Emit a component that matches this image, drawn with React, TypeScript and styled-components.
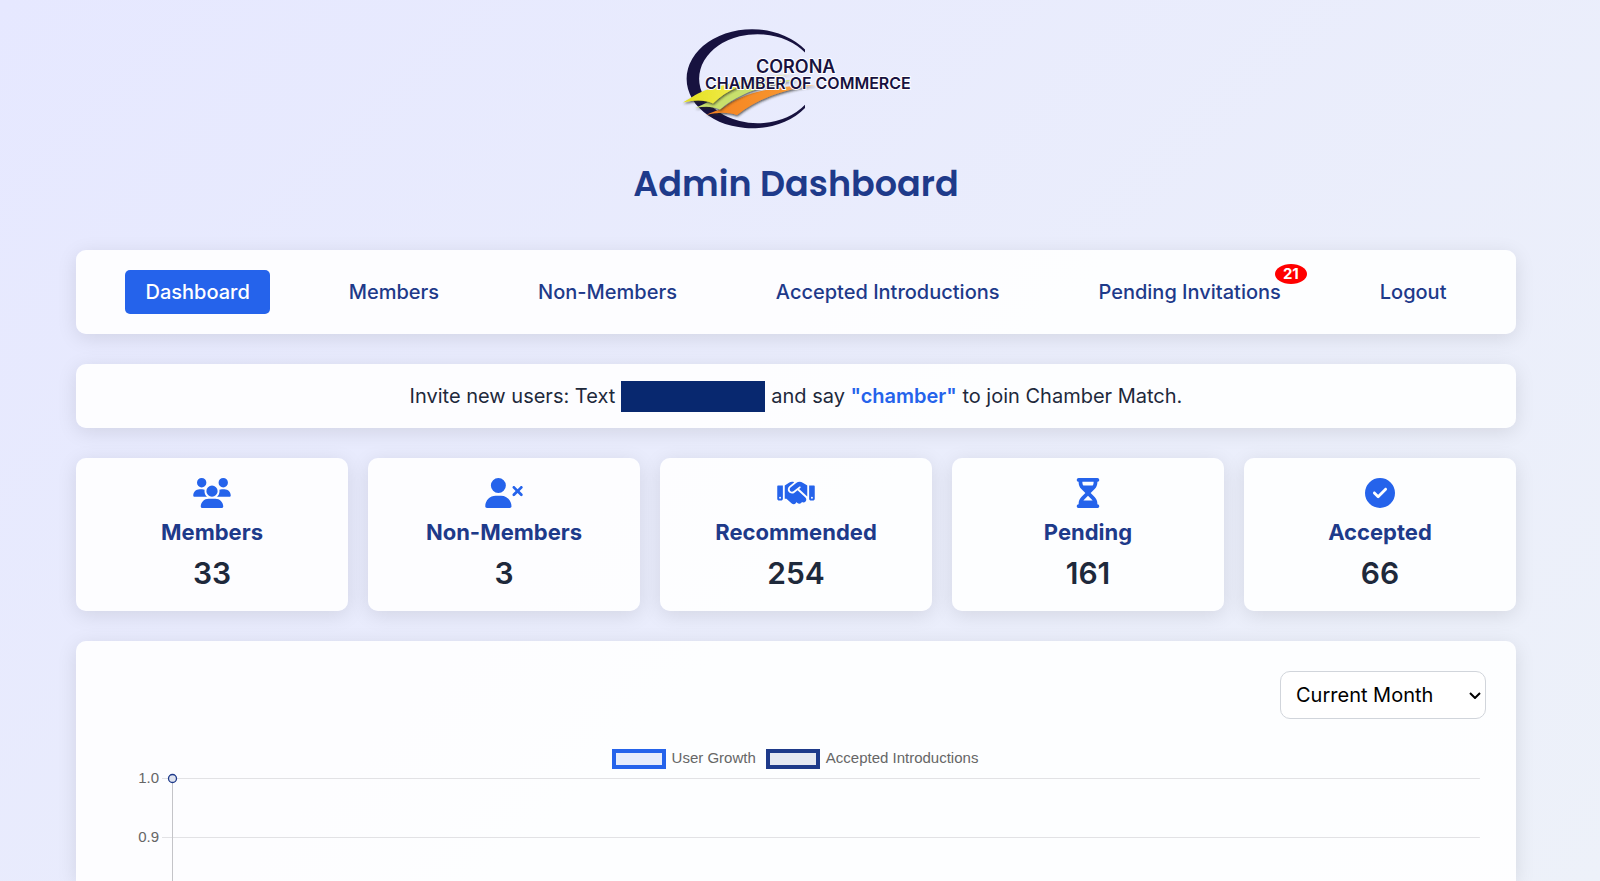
import React from 'react';
import styled, { createGlobalStyle } from 'styled-components';
import {
  FaUsers,
  FaUserXmark,
  FaHandshake,
  FaCircleCheck,
} from 'react-icons/fa6';

const GlobalStyle = createGlobalStyle`
  *, *::before, *::after { box-sizing: border-box; }
  html { background: #edf0fa; }
  body {
    margin: 0;
    padding: 20px 28px 0 20px;
    min-height: 100vh;
    font-family: Inter, "Liberation Sans", sans-serif;
    font-size: 20px;
    line-height: 24px;
    color: #1e293b;
    background: linear-gradient(135deg, #e6e8ff 0%, #edf1f9 100%);
  }
`;

const Page = styled.div`
  max-width: 1440px;
  margin: 0 auto;
  display: flex;
  flex-direction: column;
  gap: 30px;
`;

const Header = styled.header`
  display: flex;
  flex-direction: column;
  align-items: center;
  gap: 16px;
`;

const Logo = styled.svg`
  display: block;
  width: 250px;
  height: 120px;
`;

const Title = styled.h1`
  margin: 0;
  padding-bottom: 8px;
  font-family: Poppins, Inter, sans-serif;
  font-size: 35px;
  font-weight: 600;
  line-height: 56px;
  color: #1e3a8a;
`;

const Panel = styled.section`
  background: rgba(255, 255, 255, 0.9);
  border-radius: 10px;
  box-shadow: 0 4px 20px rgba(0, 0, 0, 0.1);
`;

const Nav = styled(Panel).attrs({ as: 'nav' })`
  padding: 20px;
`;

const NavList = styled.ul`
  margin: 0;
  padding: 0;
  list-style: none;
  display: flex;
  justify-content: space-around;
`;

const NavItem = styled.li`
  position: relative;
`;

const NavLink = styled.a<{ $active?: boolean }>`
  display: block;
  padding: 10px 20px;
  border-radius: 5px;
  font-weight: 500;
  text-decoration: none;
  color: ${({ $active }) => ($active ? '#ffffff' : '#1e3a8a')};
  background: ${({ $active }) => ($active ? '#2563eb' : 'transparent')};
`;

const Badge = styled.span`
  position: absolute;
  top: -6px;
  right: -6px;
  padding: 0 8px;
  border-radius: 50%;
  background: #ff0000;
  color: #ffffff;
  font-size: 15px;
  font-weight: 700;
  line-height: 20px;
`;

const Invite = styled(Panel)`
  padding: 16px 20px;
  display: flex;
  justify-content: center;
  align-items: center;
  gap: 6px;
  line-height: 32px;
`;

const Redacted = styled.span`
  width: 144px;
  height: 31px;
  background: #08286f;
`;

const Keyword = styled.strong`
  font-weight: 600;
  color: #2563eb;
`;

const Stats = styled.div`
  display: grid;
  grid-template-columns: repeat(5, 1fr);
  gap: 20px;
`;

const StatCard = styled(Panel).attrs({ as: 'article' })`
  padding: 20px;
  display: flex;
  flex-direction: column;
  align-items: center;
  text-align: center;
  color: #2563eb;

  svg {
    display: block;
    width: 38px;
    height: 30px;
  }
`;

const StatName = styled.h2`
  margin: 11px 0 9px;
  font-size: 22px;
  font-weight: 700;
  line-height: 27px;
  color: #1e3a8a;
`;

const StatValue = styled.p`
  margin: 0;
  font-size: 30px;
  font-weight: 600;
  line-height: 36px;
  color: #1e293b;
`;

const ChartPanel = styled(Panel)`
  padding: 30px 30px 0;
  border-radius: 10px 10px 0 0;
`;

const Toolbar = styled.div`
  display: flex;
  justify-content: flex-end;
  margin-bottom: 30px;
`;

const PeriodField = styled.div`
  position: relative;
  width: 206px;
`;

const Period = styled.select`
  appearance: none;
  display: block;
  width: 100%;
  height: 48px;
  padding: 0 15px;
  border: 1px solid #d1d5db;
  border-radius: 10px;
  background: #ffffff;
  color: #000000;
  font-family: inherit;
  font-size: 20px;
`;

const Chevron = styled.svg`
  position: absolute;
  top: 21px;
  right: 5px;
  width: 12px;
  height: 7px;
  pointer-events: none;
`;

const Legend = styled.div`
  display: flex;
  justify-content: center;
  gap: 10px;
  padding-right: 2px;
  font-family: "Liberation Sans", Arial, sans-serif;
  font-size: 15px;
  line-height: 18px;
  color: #666666;
`;

const LegendItem = styled.span`
  display: flex;
  gap: 6px;
`;

const Swatch = styled.span<{ $line: string; $fill: string }>`
  width: 54px;
  height: 20px;
  border: 4px solid ${({ $line }) => $line};
  background: ${({ $fill }) => $fill};
`;

const Plot = styled.svg`
  display: block;
  width: 100%;
  height: 112px;

  text {
    font-family: "Liberation Sans", Arial, sans-serif;
    font-size: 15px;
    fill: #666666;
    text-anchor: end;
  }
`;

function Hourglass() {
  return (
    <svg viewBox="0 0 384 512" fill="currentColor" aria-hidden>
      <path d="M32 0C14.3 0 0 14.3 0 32S14.3 64 32 64V75c0 42.4 16.9 83.1 46.9 113.1L146.7 256 78.9 323.9C48.9 353.9 32 394.6 32 437v11c-17.7 0-32 14.3-32 32s14.3 32 32 32H352c17.7 0 32-14.3 32-32s-14.3-32-32-32V437c0-42.4-16.9-83.1-46.9-113.1L237.3 256l67.9-67.9c30-30 46.9-70.7 46.9-113.1V64c17.7 0 32-14.3 32-32s-14.3-32-32-32H32zM96 75V64H288V75c0 19-5.6 37.4-16 53H112c-10.3-15.6-16-34-16-53zm16 309c3.5-5.3 7.6-10.3 12.1-14.9L192 301.3l67.9 67.9c4.6 4.6 8.6 9.6 12.1 14.9H112z" />
    </svg>
  );
}

const links = [
  { label: 'Dashboard', active: true },
  { label: 'Members' },
  { label: 'Non-Members' },
  { label: 'Accepted Introductions' },
  { label: 'Pending Invitations', badge: 21 },
  { label: 'Logout' },
];

const stats: { name: string; value: number; Icon: React.ComponentType }[] = [
  { name: 'Members', value: 33, Icon: FaUsers },
  { name: 'Non-Members', value: 3, Icon: FaUserXmark },
  { name: 'Recommended', value: 254, Icon: FaHandshake },
  { name: 'Pending', value: 161, Icon: Hourglass },
  { name: 'Accepted', value: 66, Icon: FaCircleCheck },
];

const ticks = ['1.0', '0.9'];
const TICK_GAP = 59;

function ChamberLogo() {
  return (
    <Logo viewBox="1 0 250 120" role="img" aria-label="Corona Chamber of Commerce">
      <defs>
        <linearGradient id="yellow" x1="0" x2="1">
          <stop offset="0" stopColor="#e3df1f" />
          <stop offset="0.4" stopColor="#f0ea45" />
          <stop offset="1" stopColor="#f7f3a0" />
        </linearGradient>
        <linearGradient id="orange" x1="0" x2="1">
          <stop offset="0" stopColor="#f58220" />
          <stop offset="0.7" stopColor="#f7952f" />
          <stop offset="1" stopColor="#fbc890" />
        </linearGradient>
        <filter id="fold" x="-10%" y="-20%" width="120%" height="150%">
          <feDropShadow dx="0.5" dy="1.5" stdDeviation="1" floodColor="#2a2a20" floodOpacity="0.75" />
        </filter>
      </defs>
      <path fill="#17123f" d="M135 29.6 A65.5 49.5 0 1 0 135 88 V84.8 A58.5 44.5 0 1 1 135 32.6 Z" />
      <path filter="url(#fold)" fill="url(#orange)" d="M36 95 C45 91 53 89 58 84 C80 71 108 66 146 65 C116 69 88 78 67 95 C58 92 48 92 36 95 Z" />
      <path filter="url(#fold)" fill="#c8e06c" d="M25 88 C34 84 41 81 46 77 C62 63 96 61 128 60 C98 64 70 72 50 89.5 C43 86 34 86 25 88 Z" />
      <path filter="url(#fold)" fill="url(#yellow)" d="M13 82.5 C22 77 28 73 36 70 C60 62 94 57 128 53 C94 58 64 63 43 83.5 C34 79.5 24 80 13 82.5 Z" />
      <g
        fill="#17123f"
        stroke="#ffffff"
        strokeWidth="2"
        strokeLinejoin="round"
        paintOrder="stroke"
        fontFamily="Inter, sans-serif"
        fontWeight="600"
      >
        <text x="86" y="53" fontSize="18">CORONA</text>
        <text x="35" y="69" fontSize="16">CHAMBER OF COMMERCE</text>
      </g>
    </Logo>
  );
}

export default function App() {
  return (
    <>
      <GlobalStyle />
      <Page>
        <Header>
          <ChamberLogo />
          <Title>Admin Dashboard</Title>
        </Header>

        <Nav>
          <NavList>
            {links.map(({ label, active, badge }) => (
              <NavItem key={label}>
                <NavLink href="#" $active={active} aria-current={active ? 'page' : undefined}>
                  {label}
                </NavLink>
                {badge && <Badge>{badge}</Badge>}
              </NavItem>
            ))}
          </NavList>
        </Nav>

        <Invite>
          <span>Invite new users: Text</span>
          <Redacted />
          <span>
            and say <Keyword>"chamber"</Keyword> to join Chamber Match.
          </span>
        </Invite>

        <Stats>
          {stats.map(({ name, value, Icon }) => (
            <StatCard key={name}>
              <Icon />
              <StatName>{name}</StatName>
              <StatValue>{value}</StatValue>
            </StatCard>
          ))}
        </Stats>

        <ChartPanel>
          <Toolbar>
            <PeriodField>
              <Period aria-label="Period" defaultValue="month">
                <option value="month">Current Month</option>
              </Period>
              <Chevron viewBox="0 0 12 7" aria-hidden>
                <path d="M1 1 L6 6 L11 1" fill="none" stroke="#000000" strokeWidth="2" />
              </Chevron>
            </PeriodField>
          </Toolbar>
          <Legend>
            <LegendItem>
              <Swatch $line="#2563eb" $fill="#e6ecfc" />
              User Growth
            </LegendItem>
            <LegendItem>
              <Swatch $line="#1e3a8a" $fill="#e5e8f2" />
              Accepted Introductions
            </LegendItem>
          </Legend>
          <Plot>
            {ticks.map((tick, i) => (
              <React.Fragment key={tick}>
                <text x="53" y={14 + i * TICK_GAP}>{tick}</text>
                <svg x="56" width="100%" height="100%" overflow="visible">
                  <rect x="0" y={9 + i * TICK_GAP} width="95.5%" height="1" fill="#e2e2e5" />
                </svg>
              </React.Fragment>
            ))}
            <rect x="66" y="9" width="1" height="100%" fill="#c4c4c8" />
            <circle cx="66.5" cy="9.5" r="4" fill="#dfe3ef" stroke="#1e3a8a" strokeWidth="1.3" />
          </Plot>
        </ChartPanel>
      </Page>
    </>
  );
}
